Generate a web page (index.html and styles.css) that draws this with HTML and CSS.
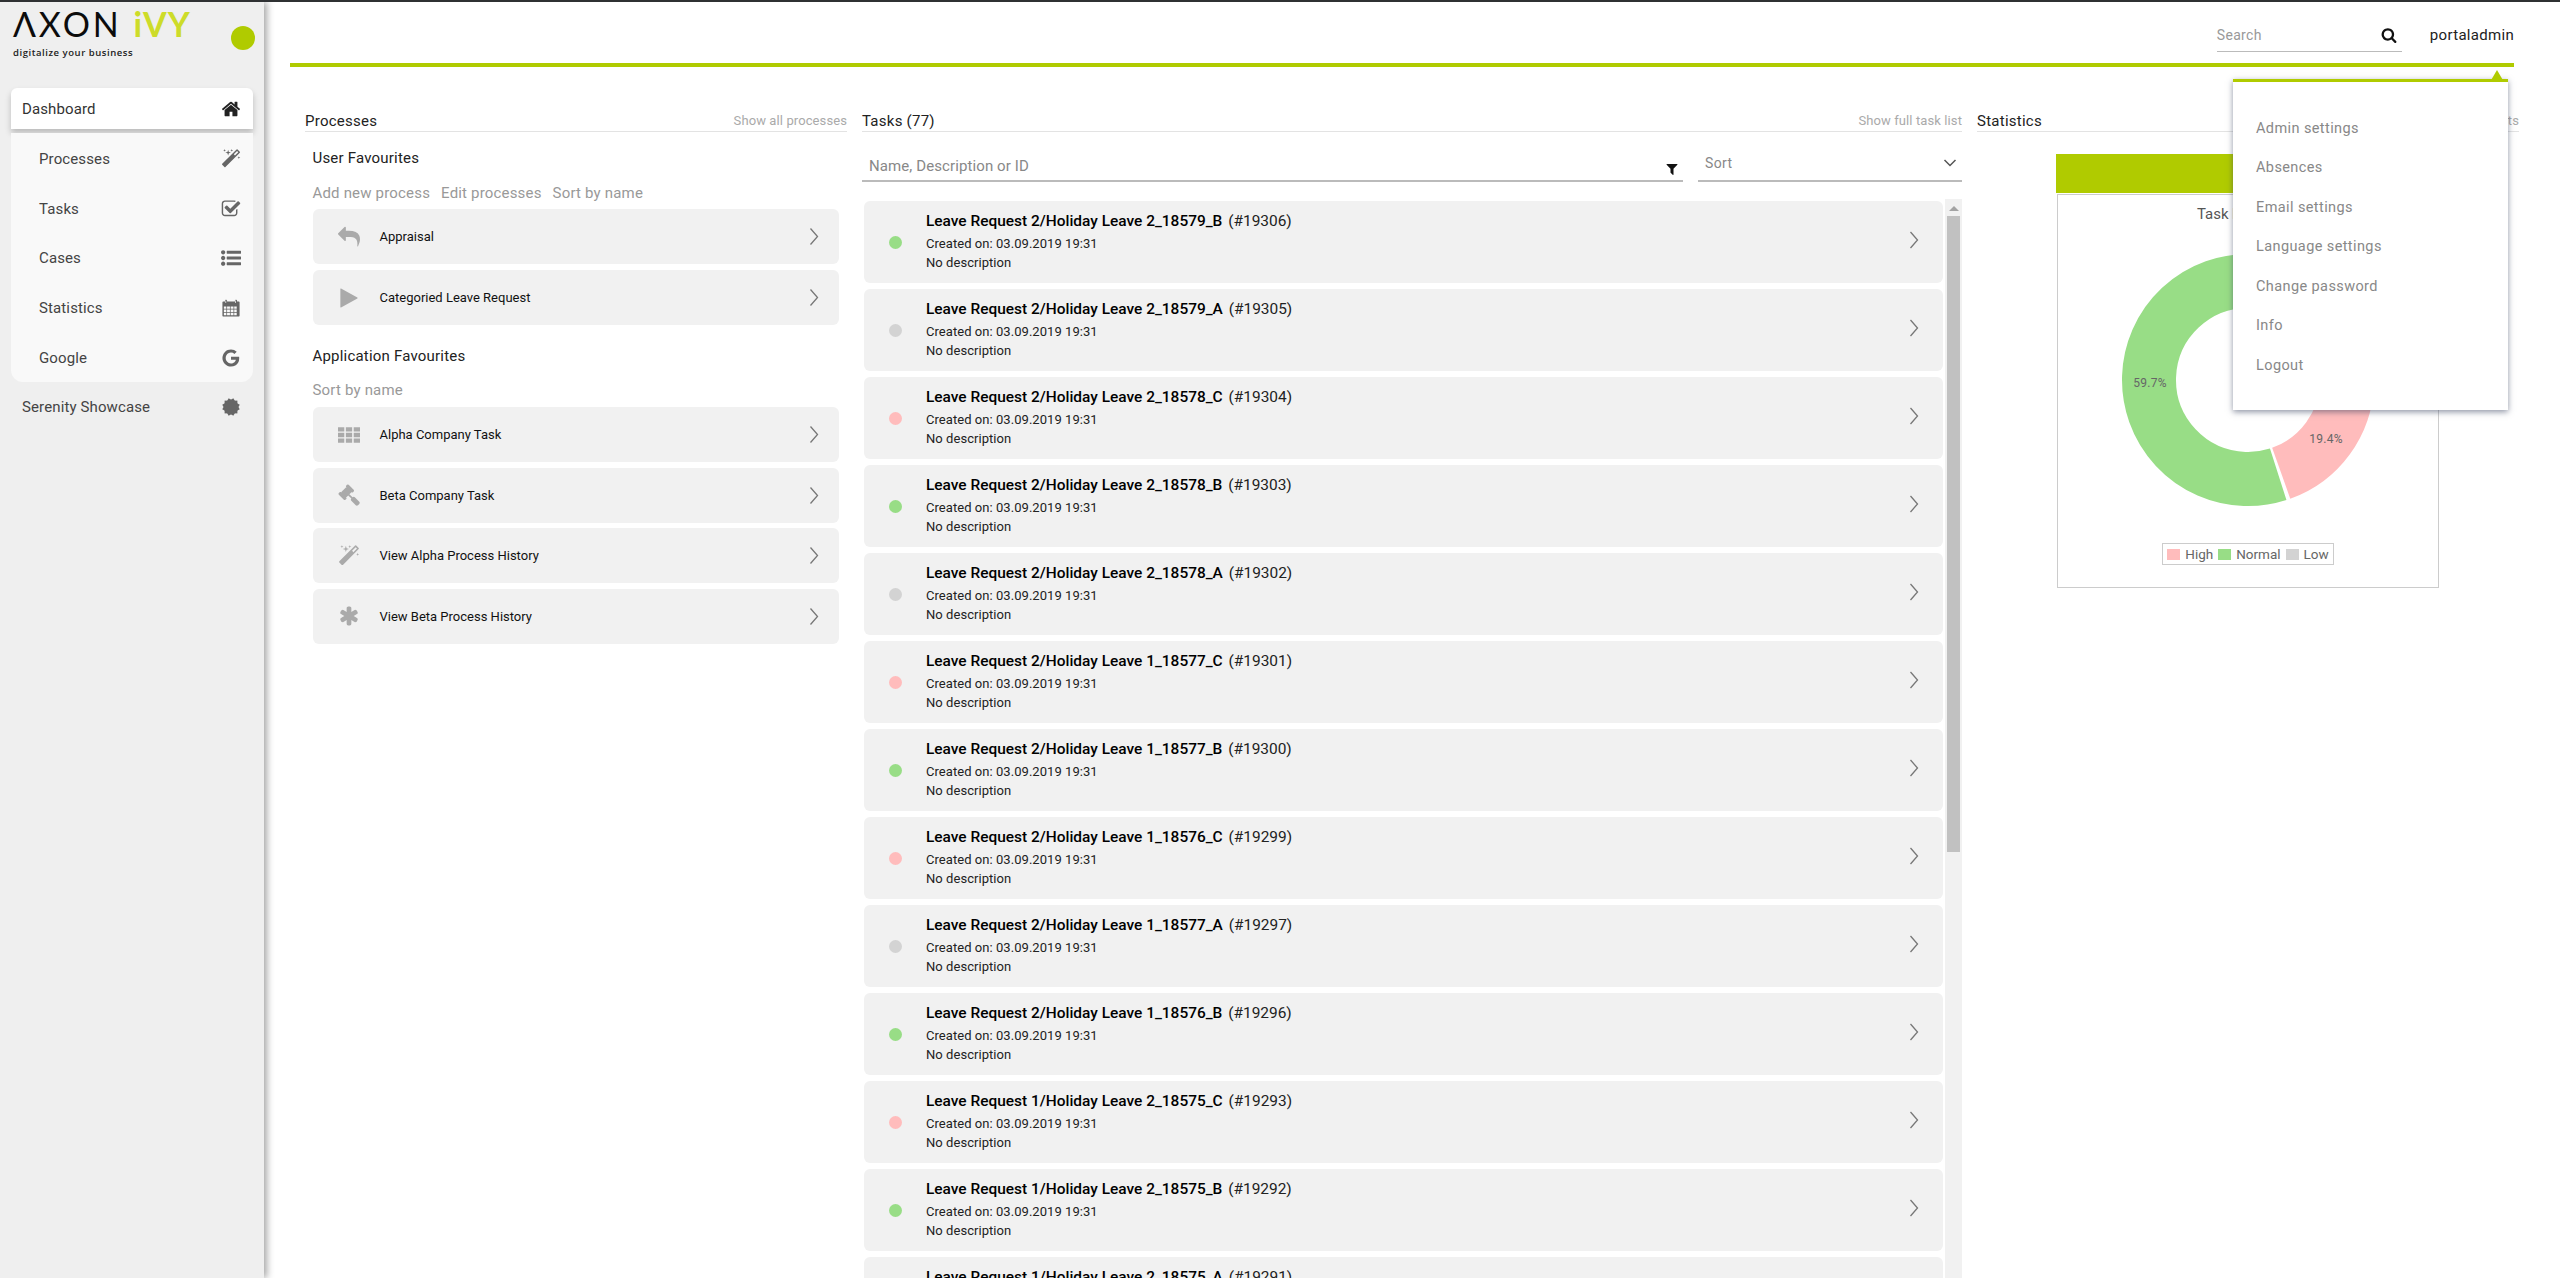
FILE: index.html
```html
<!DOCTYPE html>
<html lang="en">
<head>
<meta charset="utf-8">
<title>Axon Ivy Portal</title>
<link rel="stylesheet" href="styles.css">
</head>
<body>
<svg class="sprite" xmlns="http://www.w3.org/2000/svg">
  <symbol id="i-home" viewBox="0 0 1792 1792"><path d="M1472 992v480q0 26-19 45t-45 19h-384v-384h-256v384h-384q-26 0-45-19t-19-45v-480q0-1 .5-3t.5-3l575-474 575 474q1 2 1 6zm223-69l-62 74q-8 9-21 11h-3q-13 0-21-7l-692-577-692 577q-12 8-24 7-13-2-21-11l-62-74q-8-10-7-23.5t11-21.5l719-599q32-26 76-26t76 26l244 204v-195q0-14 9-23t23-9h192q14 0 23 9t9 23v408l219 182q10 8 11 21.5t-7 23.5z"/></symbol>
  <symbol id="i-magic" viewBox="0 0 1792 1792"><path d="M1254 581l293-293-107-107-293 293zm447-293q0 27-18 45l-1286 1286q-18 18-45 18t-45-18l-198-198q-18-18-18-45t18-45l1286-1286q18-18 45-18t45 18l198 198q18 18 18 45zm-1351-190l98 30-98 30-30 98-30-98-98-30 98-30 30-98zm350 162l196 60-196 60-60 196-60-196-196-60 196-60 60-196zm930 478l98 30-98 30-30 98-30-98-98-30 98-30 30-98zm-640-640l98 30-98 30-30 98-30-98-98-30 98-30 30-98z"/></symbol>
  <symbol id="i-check" viewBox="0 0 1792 1792"><path d="M1472 930v318q0 119-84.5 203.5t-203.5 84.5h-832q-119 0-203.5-84.5t-84.5-203.5v-832q0-119 84.5-203.5t203.5-84.5h832q63 0 117 25 15 7 18 23 3 17-9 29l-49 49q-10 10-23 10-3 0-9-2-23-6-45-6h-832q-66 0-113 47t-47 113v832q0 66 47 113t113 47h832q66 0 113-47t47-113v-254q0-13 9-22l64-64q10-10 23-10 6 0 12 3 20 8 20 29zm231-489l-814 814q-24 24-57 24t-57-24l-430-430q-24-24-24-57t24-57l110-110q24-24 57-24t57 24l263 263 647-647q24-24 57-24t57 24l110 110q24 24 24 57t-24 57z"/></symbol>
  <symbol id="i-list" viewBox="0 0 1792 1792"><path d="M384 1408q0 80-56 136t-136 56-136-56-56-136 56-136 136-56 136 56 56 136zm0-512q0 80-56 136t-136 56-136-56-56-136 56-136 136-56 136 56 56 136zm1408 416v192q0 13-9.5 22.5t-22.5 9.5h-1216q-13 0-22.5-9.5t-9.5-22.5v-192q0-13 9.5-22.5t22.5-9.5h1216q13 0 22.5 9.5t9.5 22.5zm-1408-928q0 80-56 136t-136 56-136-56-56-136 56-136 136-56 136 56 56 136zm1408 416v192q0 13-9.5 22.5t-22.5 9.5h-1216q-13 0-22.5-9.5t-9.5-22.5v-192q0-13 9.5-22.5t22.5-9.5h1216q13 0 22.5 9.5t9.5 22.5zm0-512v192q0 13-9.5 22.5t-22.5 9.5h-1216q-13 0-22.5-9.5t-9.5-22.5v-192q0-13 9.5-22.5t22.5-9.5h1216q13 0 22.5 9.5t9.5 22.5z"/></symbol>
  <symbol id="i-calendar" viewBox="0 0 1792 1792"><path fill-rule="evenodd" d="M128 384q0-64 64-64h160v-64q0-96 80-96h32q80 0 80 96v64h704v-64q0-96 80-96h32q80 0 80 96v64h160q64 0 64 64v1216q0 64-64 64H192q-64 0-64-64zM256 768v192h224V768zm288 0v192h256V768zm320 0v192h256V768zm320 0v192h224V768zM256 1024v224h224v-224zm288 0v224h256v-224zm320 0v224h256v-224zm320 0v224h224v-224zM256 1312v224h224v-224zm288 0v224h256v-224zm320 0v224h256v-224zm320 0v224h224v-224zM400 224v224h64V224zm864 0v224h64V224z"/></symbol>
  <symbol id="i-google" viewBox="0 0 1792 1792"><path d="M896 786h725q12 67 12 128 0 217-91 387.5t-259.5 266.5-386.5 96q-157 0-299-60.5t-245-163.5-163.5-245-60.5-299 60.5-299 163.5-245 245-163.5 299-60.5q300 0 515 201l-209 201q-123-119-306-119-129 0-238.5 65t-173.5 176.5-64 243.5 64 243.5 173.5 176.5 238.5 65q87 0 160-24t120-60 82-82 51.5-87 22.5-78h-436v-264z"/></symbol>
  <symbol id="i-cert" viewBox="0 0 100 100"><g><rect x="18" y="18" width="64" height="64"/><rect x="18" y="18" width="64" height="64" transform="rotate(30 50 50)"/><rect x="18" y="18" width="64" height="64" transform="rotate(60 50 50)"/></g></symbol>
  <symbol id="i-reply" viewBox="0 0 1792 1792"><path d="M1792 1120q0 166-127 451-3 7-10.5 24t-13.5 30-13 22q-12 17-28 17-15 0-23.5-10t-8.5-25q0-9 2.5-26.5t2.5-23.5q5-68 5-123 0-101-17.5-181t-48.5-138.5-80-101-105.5-69.5-133-42.5-154-21.5-175.5-6h-224v256q0 26-19 45t-45 19-45-19l-512-512q-19-19-19-45t19-45l512-512q19-19 45-19t45 19 19 45v256h224q713 0 875 403 53 134 53 333z"/></symbol>
  <symbol id="i-play" viewBox="0 0 1792 1792"><path d="M1576 927l-1328 738q-23 13-39.5 3t-16.5-36v-1472q0-26 16.5-36t39.5 3l1328 738q23 13 23 31t-23 31z"/></symbol>
  <symbol id="i-th" viewBox="0 0 1792 1792"><path d="M0 256h512v352H0zm640 0h512v352H640zm640 0h512v352h-512zM0 720h512v352H0zm640 0h512v352H640zm640 0h512v352h-512zM0 1184h512v352H0zm640 0h512v352H640zm640 0h512v352h-512z"/></symbol>
  <symbol id="i-gavel" viewBox="0 0 1792 1792"><path d="M1771 1536q0 53-37 90l-107 108q-39 37-91 37-53 0-90-37l-363-364q-38-36-38-90 0-53 43-96l-256-256-126 126q-14 14-34 14t-34-14q2 2 12.5 12t12.5 13 10 11.5 10 13.5 6 13.5 5.5 16.5 1.5 18q0 38-28 68-3 3-16.5 18t-19 20.5-18.5 16.5-22 15.5-22 9-26 4.5q-40 0-68-28l-408-408q-28-28-28-68 0-13 4.5-26t9-22 15.5-22 16.5-18.5 20.5-19 18-16.5q30-28 68-28 10 0 18 1.5t16.5 5.5 13.5 6 13.5 10 11.5 10 13 12.5 12 12.5q-14-14-14-34t14-34l348-348q14-14 34-14t34 14q-2-2-12.5-12t-12.5-13-10-11.5-10-13.5-6-13.5-5.5-16.5-1.5-18q0-38 28-68 3-3 16.5-18t19-20.5 18.5-16.5 22-15.5 22-9 26-4.5q40 0 68 28l408 408q28 28 28 68 0 13-4.5 26t-9 22-15.5 22-16.5 18.5-20.5 19-18 16.5q-30 28-68 28-10 0-18-1.5t-16.5-5.5-13.5-6-13.5-10-11.5-10-13-12.5-12-12.5q14 14 14 34t-14 34l-126 126 256 256q43-43 96-43 52 0 91 37l363 363q37 39 37 91z"/></symbol>
  <symbol id="i-asterisk" viewBox="0 0 1792 1792"><path d="M1546 1050q46 26 59.5 77.5t-12.5 97.5l-64 110q-26 46-77.5 59.5t-97.5-12.5l-266-153v307q0 52-38 90t-90 38h-128q-52 0-90-38t-38-90v-307l-266 153q-46 26-97.5 12.5t-77.5-59.5l-64-110q-26-46-12.5-97.5t59.5-77.5l266-154-266-154q-46-26-59.5-77.5t12.5-97.5l64-110q26-46 77.5-59.5t97.5 12.5l266 153v-307q0-52 38-90t90-38h128q52 0 90 38t38 90v307l266-153q46-26 97.5-12.5t77.5 59.5l64 110q26 46 12.5 97.5t-59.5 77.5l-266 154z"/></symbol>
  <symbol id="i-search" viewBox="0 0 1792 1792"><path d="M1216 832q0-185-131.5-316.5t-316.5-131.5-316.5 131.5-131.5 316.5 131.5 316.5 316.5 131.5 316.5-131.5 131.5-316.5zm512 832q0 52-38 90t-90 38q-54 0-90-38l-343-342q-179 124-399 124-143 0-273.5-55.5t-225-150-150-225-55.5-273.5 55.5-273.5 150-225 225-150 273.5-55.5 273.5 55.5 225 150 150 225 55.5 273.5q0 220-124 399l343 343q37 37 37 90z"/></symbol>
  <symbol id="i-filter" viewBox="0 0 1792 1792"><path d="M1595 295q17 41-14 70l-493 493v742q0 42-39 59-13 5-25 5-27 0-45-19l-256-256q-19-19-19-45v-486l-493-493q-31-29-14-70 17-39 59-39h1280q42 0 59 39z"/></symbol>
  <symbol id="i-chev" viewBox="0 0 10 20"><path d="M1.5 2 L8.5 10 L1.5 18" fill="none" stroke="currentColor" stroke-width="1.3"/></symbol>
  <symbol id="i-down" viewBox="0 0 14 10"><path d="M1.5 2 L7 7.5 L12.5 2" fill="none" stroke="currentColor" stroke-width="1.5"/></symbol>
</svg>

<div class="topline"></div>
<div class="shell">
  <aside class="sidebar">
    <div class="brand">
      <div class="logo">
        <div class="logo-word"><span class="logo-axon">ΛXON</span><span class="logo-ivy">iVY</span></div>
        <div class="logo-tag">digitalize your business</div>
      </div>
      <span class="brand-dot"></span>
    </div>
    <a class="nav-item nav-active"><span>Dashboard</span><svg class="nav-ico"><use href="#i-home"/></svg></a>
    <div class="subnav">
      <a class="sub-item"><span>Processes</span><svg class="nav-ico"><use href="#i-magic"/></svg></a>
      <a class="sub-item"><span>Tasks</span><svg class="nav-ico"><use href="#i-check"/></svg></a>
      <a class="sub-item"><span>Cases</span><svg class="nav-ico"><use href="#i-list"/></svg></a>
      <a class="sub-item"><span>Statistics</span><svg class="nav-ico"><use href="#i-calendar"/></svg></a>
      <a class="sub-item"><span>Google</span><svg class="nav-ico"><use href="#i-google"/></svg></a>
    </div>
    <a class="nav-item"><span>Serenity Showcase</span><svg class="nav-ico"><use href="#i-cert"/></svg></a>
  </aside>

  <main class="main">
    <header class="header">
      <div class="search-box"><span class="search-ph">Search</span><svg class="search-ico"><use href="#i-search"/></svg></div>
      <span class="user-name">portaladmin</span>
    </header>

    <div class="columns">
      <section class="col col-processes">
        <div class="col-head"><h2>Processes</h2><a>Show all processes</a></div>
        <div class="col-body">
          <h3 class="group-title">User Favourites</h3>
          <div class="group-links"><a>Add new process</a><a>Edit processes</a><a>Sort by name</a></div>
          <div class="proc-list">
            <a class="proc-card"><svg class="proc-ico"><use href="#i-reply"/></svg><span>Appraisal</span><svg class="chev chev-proc"><use href="#i-chev"/></svg></a>
            <a class="proc-card"><svg class="proc-ico"><use href="#i-play"/></svg><span>Categoried Leave Request</span><svg class="chev chev-proc"><use href="#i-chev"/></svg></a>
          </div>
          <h3 class="group-title group-second">Application Favourites</h3>
          <div class="group-links group-links-second"><a>Sort by name</a></div>
          <div class="proc-list proc-list-tight">
            <a class="proc-card"><svg class="proc-ico"><use href="#i-th"/></svg><span>Alpha Company Task</span><svg class="chev chev-proc"><use href="#i-chev"/></svg></a>
            <a class="proc-card"><svg class="proc-ico"><use href="#i-gavel"/></svg><span>Beta Company Task</span><svg class="chev chev-proc"><use href="#i-chev"/></svg></a>
            <a class="proc-card"><svg class="proc-ico"><use href="#i-magic"/></svg><span>View Alpha Process History</span><svg class="chev chev-proc"><use href="#i-chev"/></svg></a>
            <a class="proc-card"><svg class="proc-ico"><use href="#i-asterisk"/></svg><span>View Beta Process History</span><svg class="chev chev-proc"><use href="#i-chev"/></svg></a>
          </div>
        </div>
      </section>

      <section class="col col-tasks">
        <div class="col-head"><h2>Tasks (77)</h2><a>Show full task list</a></div>
        <div class="filters">
          <div class="filter-search"><span>Name, Description or ID</span><svg class="filter-ico"><use href="#i-filter"/></svg></div>
          <div class="filter-sort"><span>Sort</span><svg class="sort-ico"><use href="#i-down"/></svg></div>
        </div>
        <div class="task-area">
          <div class="task-list">
            <article class="task-card"><i class="dot dot-normal"></i><div class="task-text"><div class="task-title"><b>Leave Request 2/Holiday Leave 2_18579_B</b> <span>(#19306)</span></div><div>Created on: 03.09.2019 19:31</div><div>No description</div></div><svg class="chev"><use href="#i-chev"/></svg></article>
            <article class="task-card"><i class="dot dot-low"></i><div class="task-text"><div class="task-title"><b>Leave Request 2/Holiday Leave 2_18579_A</b> <span>(#19305)</span></div><div>Created on: 03.09.2019 19:31</div><div>No description</div></div><svg class="chev"><use href="#i-chev"/></svg></article>
            <article class="task-card"><i class="dot dot-high"></i><div class="task-text"><div class="task-title"><b>Leave Request 2/Holiday Leave 2_18578_C</b> <span>(#19304)</span></div><div>Created on: 03.09.2019 19:31</div><div>No description</div></div><svg class="chev"><use href="#i-chev"/></svg></article>
            <article class="task-card"><i class="dot dot-normal"></i><div class="task-text"><div class="task-title"><b>Leave Request 2/Holiday Leave 2_18578_B</b> <span>(#19303)</span></div><div>Created on: 03.09.2019 19:31</div><div>No description</div></div><svg class="chev"><use href="#i-chev"/></svg></article>
            <article class="task-card"><i class="dot dot-low"></i><div class="task-text"><div class="task-title"><b>Leave Request 2/Holiday Leave 2_18578_A</b> <span>(#19302)</span></div><div>Created on: 03.09.2019 19:31</div><div>No description</div></div><svg class="chev"><use href="#i-chev"/></svg></article>
            <article class="task-card"><i class="dot dot-high"></i><div class="task-text"><div class="task-title"><b>Leave Request 2/Holiday Leave 1_18577_C</b> <span>(#19301)</span></div><div>Created on: 03.09.2019 19:31</div><div>No description</div></div><svg class="chev"><use href="#i-chev"/></svg></article>
            <article class="task-card"><i class="dot dot-normal"></i><div class="task-text"><div class="task-title"><b>Leave Request 2/Holiday Leave 1_18577_B</b> <span>(#19300)</span></div><div>Created on: 03.09.2019 19:31</div><div>No description</div></div><svg class="chev"><use href="#i-chev"/></svg></article>
            <article class="task-card"><i class="dot dot-high"></i><div class="task-text"><div class="task-title"><b>Leave Request 2/Holiday Leave 1_18576_C</b> <span>(#19299)</span></div><div>Created on: 03.09.2019 19:31</div><div>No description</div></div><svg class="chev"><use href="#i-chev"/></svg></article>
            <article class="task-card"><i class="dot dot-low"></i><div class="task-text"><div class="task-title"><b>Leave Request 2/Holiday Leave 1_18577_A</b> <span>(#19297)</span></div><div>Created on: 03.09.2019 19:31</div><div>No description</div></div><svg class="chev"><use href="#i-chev"/></svg></article>
            <article class="task-card"><i class="dot dot-normal"></i><div class="task-text"><div class="task-title"><b>Leave Request 2/Holiday Leave 1_18576_B</b> <span>(#19296)</span></div><div>Created on: 03.09.2019 19:31</div><div>No description</div></div><svg class="chev"><use href="#i-chev"/></svg></article>
            <article class="task-card"><i class="dot dot-high"></i><div class="task-text"><div class="task-title"><b>Leave Request 1/Holiday Leave 2_18575_C</b> <span>(#19293)</span></div><div>Created on: 03.09.2019 19:31</div><div>No description</div></div><svg class="chev"><use href="#i-chev"/></svg></article>
            <article class="task-card"><i class="dot dot-normal"></i><div class="task-text"><div class="task-title"><b>Leave Request 1/Holiday Leave 2_18575_B</b> <span>(#19292)</span></div><div>Created on: 03.09.2019 19:31</div><div>No description</div></div><svg class="chev"><use href="#i-chev"/></svg></article>
            <article class="task-card"><i class="dot dot-low"></i><div class="task-text"><div class="task-title"><b>Leave Request 1/Holiday Leave 2_18575_A</b> <span>(#19291)</span></div><div>Created on: 03.09.2019 19:31</div><div>No description</div></div><svg class="chev"><use href="#i-chev"/></svg></article>
          </div>
          <div class="scrollbar">
            <span class="sb-up"></span>
            <span class="sb-thumb"></span>
            <span class="sb-down"></span>
          </div>
        </div>
      </section>

      <section class="col col-stats">
        <div class="col-head"><h2>Statistics</h2><a>Show all charts</a></div>
        <div class="chart-card">
          <div class="chart-bar"></div>
          <div class="chart-box">
            <div class="chart-title">Task by Priority</div>
            <svg class="donut" viewBox="-130 -130 260 260">
              <g transform="rotate(2)" fill="none" stroke-width="54">
                <circle r="99" pathLength="100" stroke="#ffbcbc" stroke-dasharray="19 81"/>
                <circle r="99" pathLength="100" stroke="#98dd86" stroke-dasharray="59.2 40.8" stroke-dashoffset="-19.5"/>
                <circle r="99" pathLength="100" stroke="#d3d3d3" stroke-dasharray="20.4 79.6" stroke-dashoffset="-79.2"/>
              </g>
              <text class="donut-label" x="-98" y="7">59.7%</text>
              <text class="donut-label" x="78" y="63">19.4%</text>
            </svg>
            <div class="legend">
              <i class="swatch swatch-high"></i><span>High</span>
              <i class="swatch swatch-normal"></i><span>Normal</span>
              <i class="swatch swatch-low"></i><span>Low</span>
            </div>
          </div>
        </div>
      </section>
    </div>
  </main>
</div>

<nav class="user-menu">
  <span class="menu-arrow"></span>
  <a>Admin settings</a>
  <a>Absences</a>
  <a>Email settings</a>
  <a>Language settings</a>
  <a>Change password</a>
  <a>Info</a>
  <a>Logout</a>
</nav>
</body>
</html>
```

FILE: styles.css
```css
* { box-sizing: border-box; }
html, body { margin: 0; height: 1278px; overflow: hidden; }
body { position: relative; font-family: Roboto, "Liberation Sans", sans-serif; font-size: 14px; color: #222; background: #fff; }
.sprite { display: none; }
a { color: inherit; text-decoration: none; }
h2, h3 { margin: 0; font-weight: 400; }

.topline { height: 2px; background: #2f3133; }
.shell { display: flex; height: 1276px; overflow: hidden; }

/* sidebar */
.sidebar { position: relative; z-index: 2; flex: 0 0 264px; background: #efefef; box-shadow: 3px 0 7px rgba(0,0,0,.35); }
.brand { display: flex; justify-content: space-between; height: 86px; padding: 4px 9px 0 13px; }
.logo-word { display: flex; align-items: baseline; height: 35px; font-family: Lato, sans-serif; font-size: 34px; line-height: 35px; }
.logo-axon { font-weight: 400; color: #0c0c0c; letter-spacing: 2.8px; }
.logo-ivy { margin-left: 12px; font-weight: 700; color: #cddc29; letter-spacing: 1px; }
.logo-tag { margin-top: 5px; font-family: "Open Sans", sans-serif; font-weight: 600; font-size: 9.5px; line-height: 13px; letter-spacing: .55px; color: #222; }
.brand-dot { width: 24px; height: 24px; margin-top: 20px; border-radius: 50%; background: #b0cb00; }
.nav-item, .sub-item { display: flex; align-items: center; justify-content: space-between; color: #444; font-size: 15px; letter-spacing: .12px; }
.nav-item { height: 41px; margin: 0 11px; padding: 0 12px 0 11px; }
.nav-active { background: #fff; border-radius: 6px 6px 0 0; color: #333; box-shadow: 0 4px 6px rgba(0,0,0,.22); }
.nav-active .nav-ico { fill: #222; }
.subnav { margin: 4px 11px 0; padding-top: 1px; background: #f9f9f9; border-radius: 0 0 12px 12px; }
.sub-item { height: 49.7px; padding: 0 12px 0 28px; }
.subnav + .nav-item { height: 50px; }
.nav-ico { width: 20px; height: 20px; fill: #666; }

/* main */
.main { flex: 1; min-width: 0; }
.header { display: flex; justify-content: flex-end; align-items: flex-start; height: 65px; margin: 0 46px 0 26px; padding-top: 15px; border-bottom: 4px solid #b0cb00; }
.search-box { display: flex; align-items: center; justify-content: space-between; width: 185px; height: 35px; padding: 2px 5px 0 0; border-bottom: 1px solid #bbb; color: #999; font-size: 14px; letter-spacing: .3px; }
.search-ico { width: 16px; height: 16px; fill: #111; }
.user-name { margin: 9px 0 0 28px; font-size: 15px; line-height: 18px; color: #222; letter-spacing: .3px; }

.columns { display: flex; gap: 15px; height: 1211px; margin-top: 43px; padding-left: 41px; overflow: hidden; }
.col { flex: 0 0 542px; display: flex; flex-direction: column; }
.col-tasks { flex-basis: 1100px; }
.col-head { display: flex; justify-content: space-between; align-items: center; height: 22px; flex: none; border-bottom: 1px solid #e3e3e3; }
.col-head h2 { font-size: 15px; color: #222; letter-spacing: .25px; }
.col-head a { font-size: 13px; color: #aaa; letter-spacing: .1px; }

/* processes */
.col-body { padding: 16px 8px 0 7.5px; }
.group-title { font-size: 15px; line-height: 20px; color: #222; letter-spacing: .2px; }
.group-links { display: flex; gap: 11px; margin-top: 15px; font-size: 15px; line-height: 20px; color: #999; letter-spacing: .18px; }
.proc-list { display: flex; flex-direction: column; gap: 6px; margin-top: 6px; }
.proc-list-tight { gap: 5.5px; margin-top: 7px; }
.group-second { margin-top: 21px; }
.group-links-second { margin-top: 14px; }
.proc-card { display: flex; align-items: center; height: 55px; padding: 0 20px 0 25px; background: #f1f1f1; border-radius: 6px; font-size: 13px; color: #111; }
.proc-ico { flex: none; width: 22px; height: 22px; margin-right: 20px; fill: #aaa; }
.chev { flex: none; width: 10px; height: 20px; margin-left: auto; color: #777; }
.chev-proc { width: 10px; height: 21px; }

/* tasks */
.filters { display: flex; gap: 15px; flex: none; height: 50px; }
.filter-search, .filter-sort { display: flex; justify-content: space-between; color: #888; border-bottom: 2px solid #bbb; line-height: 20px; }
.filter-search { flex: 0 0 821px; padding: 24px 0 0 7px; font-size: 15px; letter-spacing: .1px; }
.filter-sort { flex: 0 0 264px; padding: 21px 5px 0 7px; font-size: 14px; letter-spacing: .4px; }
.filter-ico { width: 14px; height: 14px; margin: 6px 4px 0 0; fill: #111; }
.sort-ico { width: 14px; height: 10px; margin-top: 5px; color: #555; }
.task-area { display: flex; flex: 1; min-height: 0; margin-top: 17px; }
.task-list { flex: 0 0 1083px; display: flex; flex-direction: column; gap: 6px; padding: 2px 2px 0; overflow: hidden; }
.task-card { flex: none; display: flex; align-items: center; height: 82px; padding: 0 24px 0 25px; background: #f1f1f1; border-radius: 6px; }
.dot { flex: none; width: 13px; height: 13px; margin: 1px 24px 0 0; border-radius: 50%; }
.dot-normal { background: #98dd86; }
.dot-low { background: #d3d3d3; }
.dot-high { background: #ffbcbc; }
.task-text { margin-top: -1px; font-size: 13px; line-height: 19.5px; color: #222; letter-spacing: .05px; }
.task-title { margin-bottom: 3px; font-size: 15.45px; line-height: 20px; color: #222; letter-spacing: 0; }
.task-title b { font-weight: 500; color: #000; margin-right: 2px; }
.task-card .chev { margin-top: -4px; }
.scrollbar { flex: 0 0 17px; display: flex; flex-direction: column; align-items: center; background: #f1f1f1; }
.sb-up { flex: none; width: 0; height: 0; margin: 7px 0 5px; border: 5px solid transparent; border-top: 0; border-bottom-color: #a3a3a3; }
.sb-thumb { flex: none; width: 13px; height: 636px; background: #c1c1c1; }
.sb-down { flex: none; width: 0; height: 0; margin: auto 0 7px; border: 6px solid transparent; border-bottom: 0; border-top-color: #444; }

/* stats */
.chart-card { width: 384px; margin: 22px auto 0; }
.chart-bar { height: 39px; background: #b0cb00; margin-bottom: 1px; }
.chart-box { display: flex; flex-direction: column; align-items: center; height: 394px; margin: 0 1px; padding-top: 9px; border: 1px solid #ccc; }
.chart-title { font-size: 15px; line-height: 20px; color: #555; }
.donut { width: 260px; height: 260px; margin-top: 26px; flex: none; }
.donut-label { font-family: Roboto, sans-serif; font-size: 12px; fill: #666; text-anchor: middle; letter-spacing: .3px; }
.legend { display: flex; align-items: center; height: 22px; margin-top: 33px; padding: 0 4px; border: 1px solid #ccc; font-size: 13.5px; color: #666; }
.swatch { width: 13px; height: 11px; margin-right: 5px; }
.legend span + .swatch { margin-left: 5px; }
.swatch-high { background: #ffbcbc; }
.swatch-normal { background: #98dd86; }
.swatch-low { background: #d3d3d3; }

/* user menu */
.user-menu { position: absolute; z-index: 5; left: 2233px; top: 79px; width: 275px; height: 331px; padding-top: 26.5px; background: #fff; border-top: 3px solid #b0cb00; box-shadow: 0 2px 6px rgba(50,60,90,.55); }
.user-menu a { display: block; height: 39.5px; padding-left: 23px; line-height: 39.5px; font-size: 14.5px; color: #888; letter-spacing: .4px; }
.menu-arrow { position: absolute; right: 4px; top: -12px; width: 0; height: 0; border: 7px solid transparent; border-top: 0; border-bottom: 12px solid #b0cb00; }
```
